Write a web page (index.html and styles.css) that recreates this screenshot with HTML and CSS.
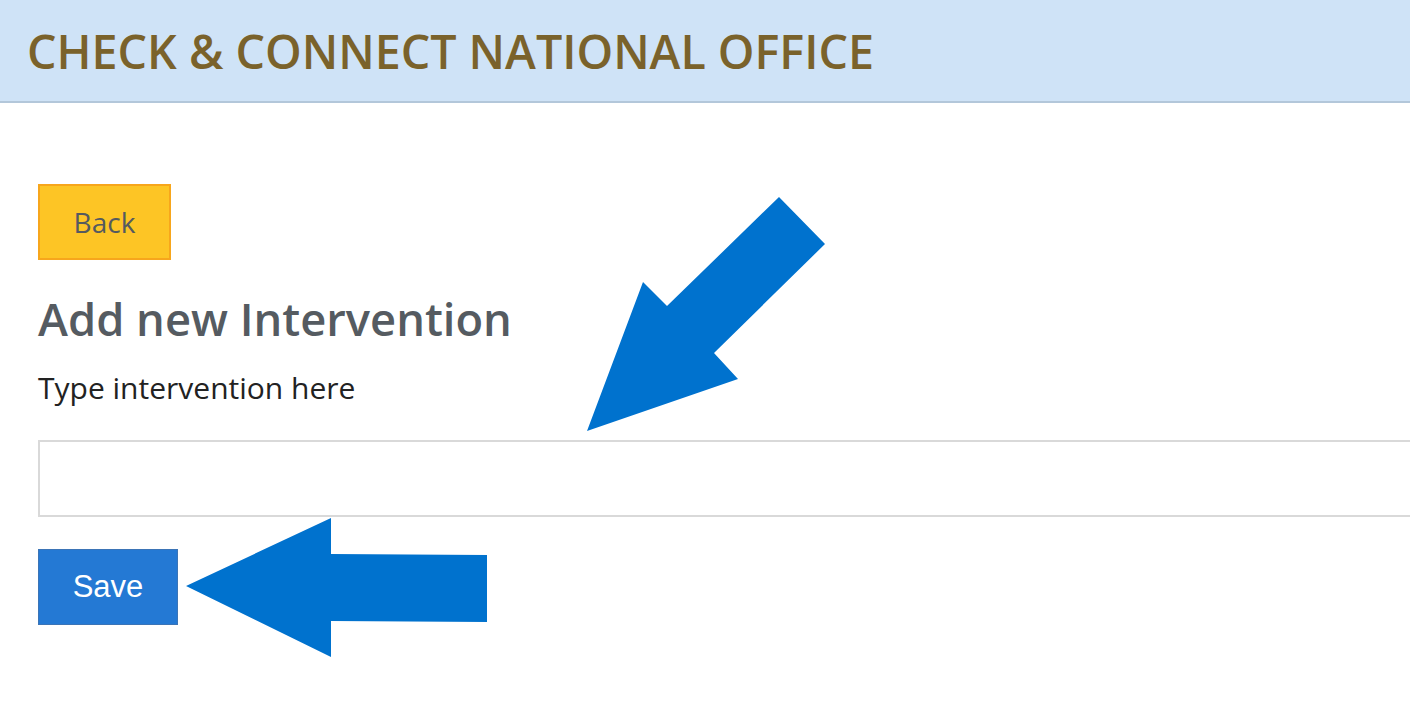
FILE: index.html
```html
<!DOCTYPE html>
<html lang="en">
<head>
<meta charset="utf-8">
<title>Add new Intervention</title>
<link rel="stylesheet" href="styles.css">
</head>
<body>
<header class="site-header">
  <h1 class="site-title">CHECK &amp; CONNECT NATIONAL OFFICE</h1>
</header>
<main class="content">
  <button class="btn btn-back" type="button">Back</button>
  <h2 class="page-heading">Add new Intervention</h2>
  <label class="field-label" for="intervention">Type intervention here</label>
  <input class="field-input" id="intervention" type="text">
  <button class="btn btn-save" type="submit">Save</button>
</main>
<svg class="annotations" width="1410" height="702" viewBox="0 0 1410 702" aria-hidden="true">
  <polygon class="arrow" points="587,431 643,282 667,306 779,197 825,244 714,353 738,379"/>
  <polygon class="arrow" points="186,586 331,518 331,554 487,555 487,622 331,621 331,657"/>
</svg>
</body>
</html>
```

FILE: styles.css
```css
html, body {
  margin: 0;
  padding: 0;
}
body {
  position: relative;
  width: 1410px;
  height: 702px;
  overflow: hidden;
  background: #ffffff;
  font-family: "Open Sans", "Noto Sans", sans-serif;
}
.site-header {
  height: 101px;
  background: #cfe3f7;
  border-bottom: 2px solid #b3c7da;
  display: flex;
  align-items: center;
  padding-left: 27px;
}
.site-title {
  margin: 0;
  font-size: 46.6px;
  font-weight: 600;
  line-height: 56px;
  color: #7a622b;
  letter-spacing: 0;
}
.content {
  display: flex;
  flex-direction: column;
  align-items: flex-start;
  padding: 81px 0 0 38px;
  overflow: hidden;
}
.btn {
  box-sizing: border-box;
  height: 76px;
  padding: 0;
  cursor: pointer;
}
.btn-back {
  width: 133px;
  background: #fdc525;
  border: 2px solid #f7a61c;
  color: #555a5f;
  font-family: "Open Sans", "Noto Sans", sans-serif;
  font-size: 28px;
}
.page-heading {
  margin: 31px 0 0 0;
  font-size: 45.3px;
  font-weight: 600;
  line-height: 56px;
  color: #555b61;
}
.field-label {
  margin-top: 21px;
  font-size: 30px;
  line-height: 40px;
  color: #222222;
}
.field-input {
  box-sizing: border-box;
  margin-top: 32px;
  width: 1420px;
  height: 77px;
  border: 2px solid #d9d9d9;
  background: #ffffff;
  outline: none;
}
.btn-save {
  margin-top: 32px;
  width: 140px;
  background: #2479d4;
  border: 1px solid #3b74b6;
  color: #ffffff;
  font-family: "Liberation Sans", Arial, sans-serif;
  font-size: 31px;
}
.annotations {
  position: absolute;
  left: 0;
  top: 0;
  pointer-events: none;
}
.arrow {
  fill: #0072ce;
}
```
